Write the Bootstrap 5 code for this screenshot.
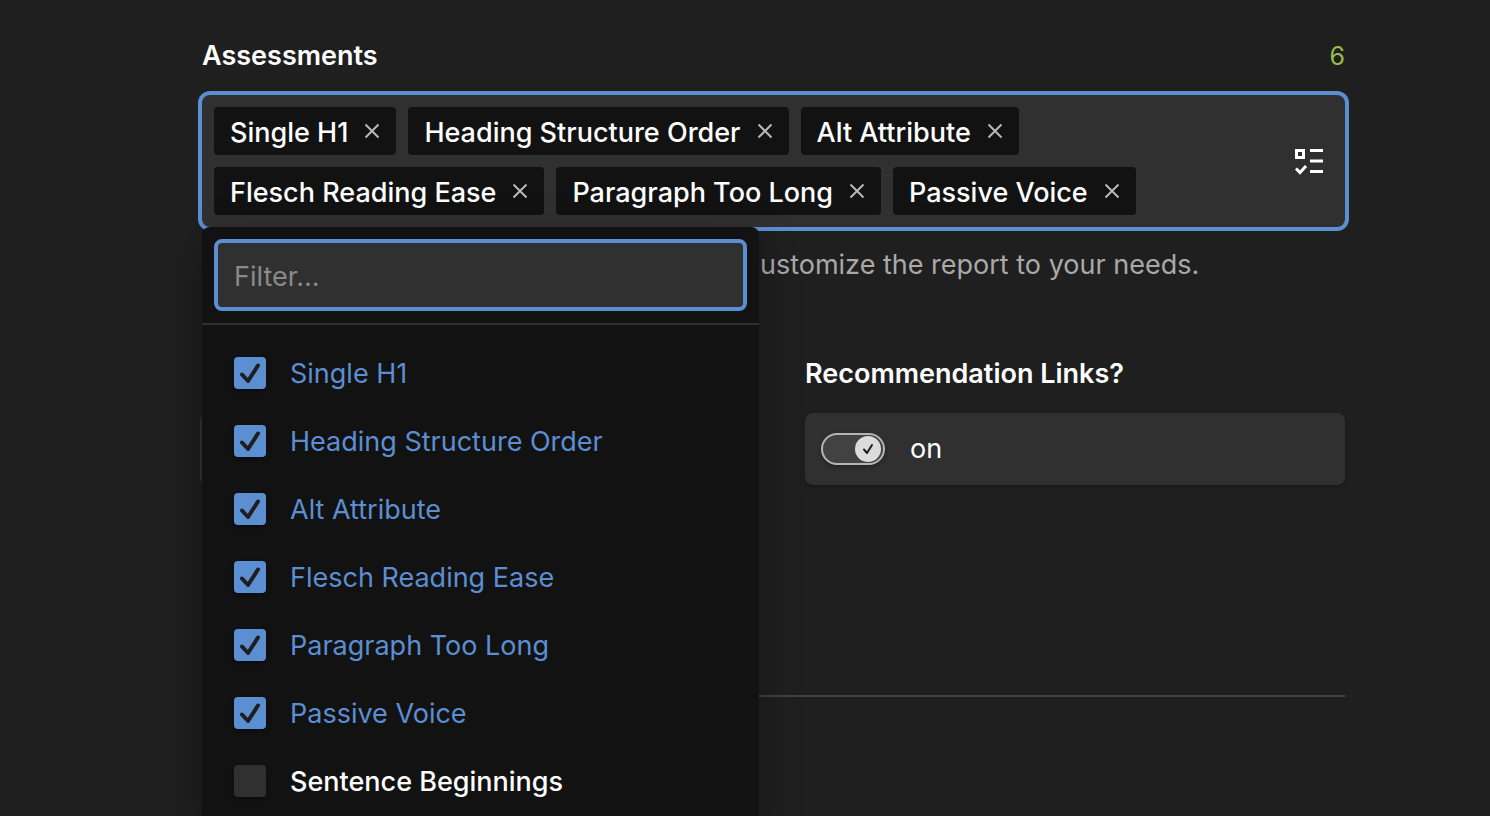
<!DOCTYPE html>
<html lang="en" data-bs-theme="dark">
<head>
<meta charset="utf-8">
<meta name="viewport" content="width=device-width, initial-scale=1">
<title>Report settings</title>
<link href="https://cdn.jsdelivr.net/npm/bootstrap@5.3.0/dist/css/bootstrap.min.css" rel="stylesheet">
<style>
  :root { --accent: #5b8fd2; --field: #303030; --panel: #121212; }
  body { background: #1f1f1f; color: #fff; font-family: Inter, "Liberation Sans", sans-serif; font-size: 27px; line-height: 36px; min-height: 100vh; overflow: hidden; }
  .settings { padding: 37px 145px 0 202px; }
  .field-title { font-size: 27px; line-height: 38px; font-weight: 600; }
  .tally { color: #98bc49; font-size: 25px; line-height: 38px; }
  .picker { margin-top: 20px; background: var(--field); border-radius: 8px; box-shadow: 0 0 0 4px var(--accent); padding: 12px 20px 12px 12px; }
  .tag-list { gap: 12px; }
  .chip { background: var(--panel); border-radius: 4px; height: 48px; padding: 4px 16px 0; gap: 16px; font-weight: 500; }
  .chip button, .list-toggle { background: none; border: 0; padding: 0; line-height: 0; }
  .chip button { margin-top: -4px; }
  .menu { position: absolute; top: 100%; left: 0; width: 557px; z-index: 5; background: var(--panel); border-radius: 8px; box-shadow: 0 12px 40px rgba(0,0,0,.3); }
  .menu-search { padding: 12px; border-bottom: 2px solid #303030; }
  .menu-search .form-control { height: 72px; background: var(--field); border: 4px solid var(--accent); border-radius: 8px; color: #fff; font-size: 27px; padding: 2px 16px 0; box-shadow: none; }
  .menu-search .form-control::placeholder { color: #8a8a8a; opacity: 1; }
  .menu-options { padding: 14px 32px; }
  .option { height: 68px; gap: 24px; }
  .option label { padding-top: 2px; }
  .option .form-check-input { width: 32px; height: 32px; margin: 0; border: 0; border-radius: 4px; background-color: var(--field); box-shadow: 0 2px 4px rgba(0,0,0,.4); }
  .option .form-check-input:checked { background-color: var(--accent); background-size: 32px 32px; background-image: url("data:image/svg+xml,%3Csvg xmlns='http://www.w3.org/2000/svg' viewBox='0 0 32 32'%3E%3Cpath fill='none' stroke='%231f1f1f' stroke-width='4' stroke-linecap='round' stroke-linejoin='round' d='M8 17.500l6 6.500L24 8.500'/%3E%3C/svg%3E"); }
  .option .form-check-input:not(:checked) + label { font-weight: 500; }
  .option .form-check-input:checked + label { color: var(--accent); }
  .hint { color: #a9a9a9; margin: 20px 0 0; }
  .pair { display: grid; grid-template-columns: 1fr 1fr; column-gap: 63px; margin-top: 72px; }
  .switch-box { margin-top: 20px; height: 72px; border-radius: 8px; background: var(--field); padding: 0 16px; gap: 25px; box-shadow: 0 2px 4px rgba(0,0,0,.25); }
  .switch-box.plain { box-shadow: 0 0 0 2px #333; }
  .switch-box .form-check-input { width: 64px; height: 32px; margin: 0; border: 2px solid #b5b5b5; border-radius: 16px; background-color: #424242; box-shadow: 0 2px 4px rgba(0,0,0,.3); }
  .switch-box .form-check-input:checked { background-position: 31px 0; background-size: 28px 28px; background-repeat: no-repeat; border-color: #b5b5b5; background-image: url("data:image/svg+xml,%3Csvg xmlns='http://www.w3.org/2000/svg' viewBox='0 0 28 28'%3E%3Ccircle cx='14' cy='14' r='13' fill='%23dcdcdc'/%3E%3Cpath fill='none' stroke='%231f1f1f' stroke-width='2' stroke-linecap='round' stroke-linejoin='round' d='M10 14.500l3 3.500L18 10'/%3E%3C/svg%3E"); }
  .rule { height: 2px; background: #404040; border: 0; opacity: 1; margin: 210px 0 0; }
</style>
</head>
<body>
<svg class="d-none" aria-hidden="true">
  <symbol id="cross" viewBox="0 0 16 16"><path d="M1.500 1.500l13 13M14.500 1.500l-13 13" stroke="#b8b8b8" stroke-width="2"/></symbol>
</svg>
<main class="settings">
  <div class="d-flex justify-content-between">
    <h2 class="field-title m-0">Assessments</h2>
    <span class="tally">6</span>
  </div>
  <div class="position-relative">
    <div class="picker d-flex align-items-center justify-content-between">
      <div class="tag-list d-flex flex-wrap">
        <span class="chip d-flex align-items-center">Single H1 <button type="button" aria-label="Remove Single H1"><svg width="16" height="16"><use href="#cross"/></svg></button></span>
        <span class="chip d-flex align-items-center">Heading Structure Order <button type="button" aria-label="Remove Heading Structure Order"><svg width="16" height="16"><use href="#cross"/></svg></button></span>
        <span class="chip d-flex align-items-center">Alt Attribute <button type="button" aria-label="Remove Alt Attribute"><svg width="16" height="16"><use href="#cross"/></svg></button></span>
        <span class="chip d-flex align-items-center">Flesch Reading Ease <button type="button" aria-label="Remove Flesch Reading Ease"><svg width="16" height="16"><use href="#cross"/></svg></button></span>
        <span class="chip d-flex align-items-center">Paragraph Too Long <button type="button" aria-label="Remove Paragraph Too Long"><svg width="16" height="16"><use href="#cross"/></svg></button></span>
        <span class="chip d-flex align-items-center">Passive Voice <button type="button" aria-label="Remove Passive Voice"><svg width="16" height="16"><use href="#cross"/></svg></button></span>
      </div>
      <button type="button" class="list-toggle flex-shrink-0" aria-label="Toggle list">
        <svg width="32" height="32" viewBox="0 0 32 32" fill="none" stroke="#fff" stroke-width="3"><path d="M3.500 5.500h7v7h-7zM17 5.500h13M17 16h13M17 26.500h13"/><path d="M3 23.500l4 4 6-6.500"/></svg>
      </button>
    </div>
    <div class="menu">
      <div class="menu-search"><input class="form-control" type="text" placeholder="Filter..." aria-label="Filter"></div>
      <div class="menu-options">
        <div class="option d-flex align-items-center"><input class="form-check-input" type="checkbox" id="o1" checked><label for="o1">Single H1</label></div>
        <div class="option d-flex align-items-center"><input class="form-check-input" type="checkbox" id="o2" checked><label for="o2">Heading Structure Order</label></div>
        <div class="option d-flex align-items-center"><input class="form-check-input" type="checkbox" id="o3" checked><label for="o3">Alt Attribute</label></div>
        <div class="option d-flex align-items-center"><input class="form-check-input" type="checkbox" id="o4" checked><label for="o4">Flesch Reading Ease</label></div>
        <div class="option d-flex align-items-center"><input class="form-check-input" type="checkbox" id="o5" checked><label for="o5">Paragraph Too Long</label></div>
        <div class="option d-flex align-items-center"><input class="form-check-input" type="checkbox" id="o6" checked><label for="o6">Passive Voice</label></div>
        <div class="option d-flex align-items-center"><input class="form-check-input" type="checkbox" id="o7"><label for="o7">Sentence Beginnings</label></div>
      </div>
    </div>
  </div>
  <p class="hint">Enable or disable the SEO assessments to customize the report to your needs.</p>
  <div class="pair">
    <div>
      <div class="field-title">&nbsp;</div>
      <div class="switch-box plain"></div>
    </div>
    <div>
      <div class="field-title">Recommendation Links?</div>
      <div class="switch-box d-flex align-items-center">
        <input class="form-check-input" type="checkbox" role="switch" id="links" checked>
        <label for="links">on</label>
      </div>
    </div>
  </div>
  <hr class="rule">
</main>
<script src="https://cdn.jsdelivr.net/npm/bootstrap@5.3.0/dist/js/bootstrap.bundle.min.js"></script>
</body>
</html>
